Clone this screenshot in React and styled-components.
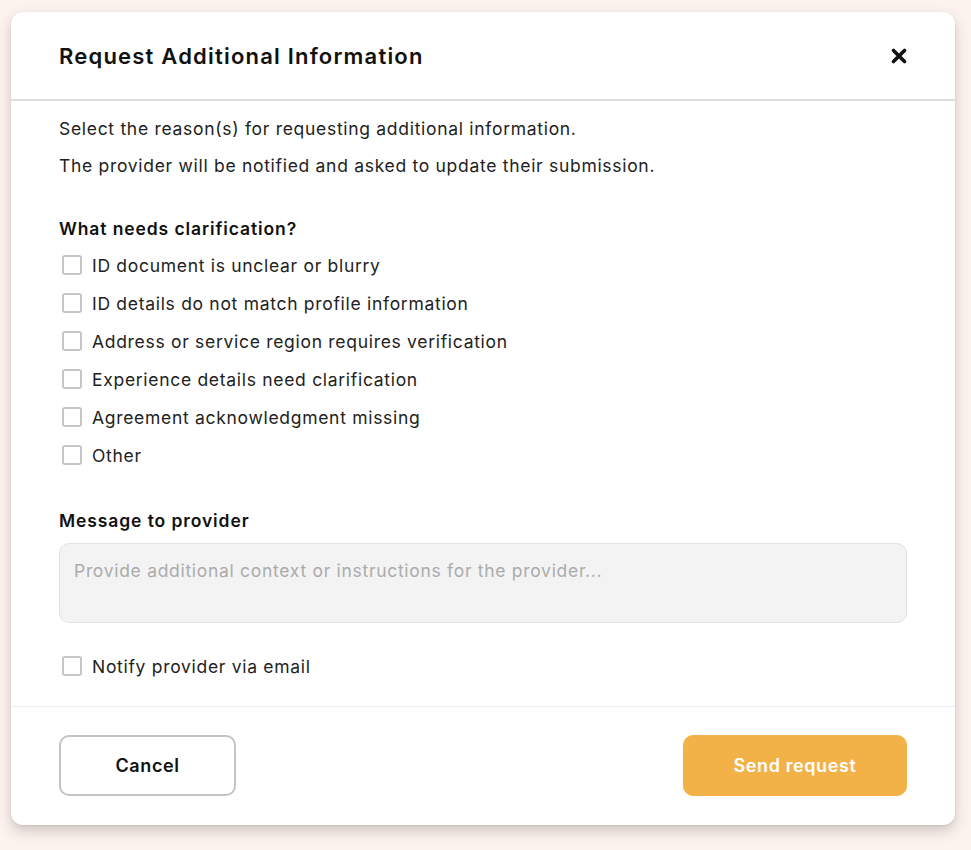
import React from "react";
import styled, { createGlobalStyle } from "styled-components";

const Global = createGlobalStyle`
  html, body { margin: 0; padding: 0; background: #fcf3ef; }
  body { font-family: "Inter", "Noto Sans", sans-serif; color: #222; }
  * { box-sizing: border-box; }
`;

const Page = styled.div`
  padding: 12px 16px 20px 11px;
`;

const Dialog = styled.div`
  width: 944px;
  background: #fff;
  border-radius: 12px;
  box-shadow: 0 6px 14px rgba(60, 40, 30, 0.22), 0 1px 3px rgba(0, 0, 0, 0.08);
  display: flex;
  flex-direction: column;
`;

const Header = styled.div`
  height: 89px;
  padding: 0 48px;
  display: flex;
  align-items: center;
  justify-content: space-between;
  border-bottom: 2px solid #dedede;
`;

const Title = styled.h2`
  margin: 0;
  font-size: 22px;
  font-weight: 600;
  color: #111;
  letter-spacing: 1.2px;
`;

const CloseButton = styled.button`
  border: 0;
  background: none;
  padding: 0;
  width: 16px;
  height: 16px;
  display: flex;
  cursor: pointer;
`;

const Body = styled.div`
  padding: 15px 48px 21px;
  display: flex;
  flex-direction: column;
`;

const Text = styled.p`
  margin: 0 0 ${(p) => p.$gap || 0}px;
  font-size: 17.5px;
  letter-spacing: 0.7px;
  line-height: 26px;
  color: #222;
`;

const Label = styled.div`
  font-size: 17.5px;
  font-weight: 600;
  letter-spacing: 0.9px;
  line-height: 26px;
  color: #111;
  margin-top: ${(p) => p.$top || 0}px;
  margin-bottom: ${(p) => p.$bottom || 0}px;
`;

const CheckList = styled.div`
  display: flex;
  flex-direction: column;
`;

const CheckRow = styled.label`
  height: 38px;
  display: flex;
  align-items: center;
  gap: 10px;
  font-size: 17.5px;
  letter-spacing: 0.7px;
  color: #222;
  cursor: pointer;
`;

const Box = styled.span`
  width: 20px;
  height: 20px;
  margin-left: 3px;
  border: 2px solid #c6c6c6;
  border-radius: 3px;
  background: #fff;
  flex: none;
`;

const TextArea = styled.textarea`
  width: 100%;
  height: 80px;
  margin-bottom: 24px;
  padding: 16px 14px 14px;
  border: 1px solid #e3e3e3;
  border-radius: 10px;
  background: #f3f3f3;
  font-family: inherit;
  font-size: 17.5px;
  letter-spacing: 0.7px;
  color: #222;
  resize: none;
  outline: none;
  &::placeholder { color: #ababab; }
`;

const Footer = styled.div`
  border-top: 1px solid #ebebf0;
  padding: 28px 48px 29px;
  display: flex;
  justify-content: space-between;
`;

const Button = styled.button`
  height: 61px;
  width: ${(p) => p.$w}px;
  border-radius: 10px;
  font-family: inherit;
  font-size: 18px;
  font-weight: 600;
  letter-spacing: 0.6px;
  cursor: pointer;
  border: ${(p) => (p.$primary ? "1px solid #f3b248" : "2px solid #c4c4c4")};
  background: ${(p) => (p.$primary ? "#f3b248" : "#fff")};
  color: ${(p) => (p.$primary ? "#fff" : "#111")};
`;

const reasons = [
  "ID document is unclear or blurry",
  "ID details do not match profile information",
  "Address or service region requires verification",
  "Experience details need clarification",
  "Agreement acknowledgment missing",
  "Other",
];

export default function App() {
  return (
    <>
      <Global />
      <Page>
        <Dialog>
          <Header>
            <Title>Request Additional Information</Title>
            <CloseButton aria-label="Close">
              <svg width="16" height="16" viewBox="0 0 16 16">
                <path d="M2.5 2.5 L13.5 13.5 M13.5 2.5 L2.5 13.5" stroke="#111" strokeWidth="3.6" strokeLinecap="round" />
              </svg>
            </CloseButton>
          </Header>
          <Body>
            <Text $gap={11}>Select the reason(s) for requesting additional information.</Text>
            <Text>The provider will be notified and asked to update their submission.</Text>
            <Label $top={37} $bottom={4}>What needs clarification?</Label>
            <CheckList>
              {reasons.map((r) => (
                <CheckRow key={r}>
                  <Box />
                  {r}
                </CheckRow>
              ))}
            </CheckList>
            <Label $top={34} $bottom={9}>Message to provider</Label>
            <TextArea placeholder="Provide additional context or instructions for the provider..." />
            <CheckRow>
              <Box />
              Notify provider via email
            </CheckRow>
          </Body>
          <Footer>
            <Button $w={177}>Cancel</Button>
            <Button $w={224} $primary>Send request</Button>
          </Footer>
        </Dialog>
      </Page>
    </>
  );
}
